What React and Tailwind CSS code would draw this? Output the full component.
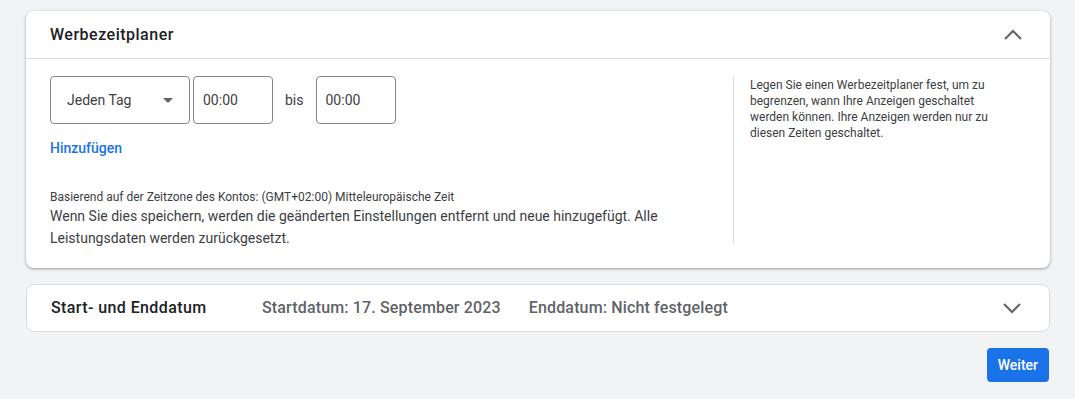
export default function App() {
  const font = { fontFamily: 'Roboto, "Noto Sans", Arial, sans-serif' };
  return (
    <div className="min-h-[399px] w-full bg-[#f1f3f4] pt-[11px] pl-[26px] pr-[25px]" style={font}>
      <div className="rounded-lg bg-white shadow-[0_1px_2px_rgba(60,64,67,0.3),0_1px_3px_1px_rgba(60,64,67,0.15)]">
        <div className="flex h-[48px] items-center justify-between border-b border-[#dadce0] px-6">
          <span className="text-[16px] font-medium tracking-[0.5px] text-[#202124]">Werbezeitplaner</span>
          <svg width="24" height="24" viewBox="0 0 24 24" className="mr-[1px]">
            <path d="M4 16l8-8 8 8" fill="none" stroke="#5f6368" strokeWidth="2" />
          </svg>
        </div>
        <div className="flex px-6 pt-[17px] pb-[19px]">
          <div className="flex-1">
            <div className="flex items-center">
              <div className="flex h-[48px] w-[140px] items-center justify-between rounded border border-[#80868b] pl-4 pr-4">
                <span className="text-[14px] text-[#3c4043]">Jeden Tag</span>
                <svg width="10" height="5" viewBox="0 0 10 5">
                  <path d="M0 0h10L5 5z" fill="#5f6368" />
                </svg>
              </div>
              <div className="ml-[3px] flex h-[48px] w-[80px] items-center rounded border border-[#80868b] pl-[9px]">
                <span className="text-[14px] text-[#3c4043]">00:00</span>
              </div>
              <span className="mx-[12px] text-[14px] text-[#3c4043]">bis</span>
              <div className="flex h-[48px] w-[80px] items-center rounded border border-[#80868b] pl-[9px]">
                <span className="text-[14px] text-[#3c4043]">00:00</span>
              </div>
            </div>
            <div className="mt-[14px] text-[14px] font-medium leading-[20px] text-[#1a73e8]">Hinzufügen</div>
            <div className="mt-[31px] text-[12px] leading-[16px] text-[#3c4043]">
              Basierend auf der Zeitzone des Kontos: (GMT+02:00) Mitteleuropäische Zeit
            </div>
            <div className="w-[660px] text-[14px] leading-[22px] text-[#3c4043]">
              Wenn Sie dies speichern, werden die geänderten Einstellungen entfernt und neue hinzugefügt. Alle
              Leistungsdaten werden zurückgesetzt.
            </div>
          </div>
          <div className="h-[168px] w-[293px] self-start border-l border-[#dadce0] pl-4 pr-[20px]">
            <p className="pt-[1px] text-[12px] leading-[16px] text-[#3c4043]">
              Legen Sie einen Werbezeitplaner fest, um zu begrenzen, wann Ihre Anzeigen geschaltet werden können. Ihre Anzeigen werden nur zu diesen Zeiten geschaltet.
            </p>
          </div>
        </div>
      </div>

      <div className="mt-[16px] flex h-[48px] items-center rounded-lg border border-[#dadce0] bg-white pl-6 pr-6">
        <span className="w-[211px] text-[16px] font-medium tracking-[0.4px] text-[#202124]">Start- und Enddatum</span>
        <span className="text-[16px] font-medium tracking-[0.15px] text-[#5f6368]">Startdatum: 17. September 2023</span>
        <span className="ml-[28px] text-[16px] font-medium tracking-[0.15px] text-[#5f6368]">Enddatum: Nicht festgelegt</span>
        <svg width="24" height="24" viewBox="0 0 24 24" className="ml-auto mr-[1px]">
          <path d="M4 8l8 8 8-8" fill="none" stroke="#5f6368" strokeWidth="2" />
        </svg>
      </div>

      <div className="mt-[16px] flex justify-end pr-px">
        <button className="h-[34px] rounded bg-[#1a73e8] px-[11px] text-[14px] font-medium text-white">
          Weiter
        </button>
      </div>
    </div>
  );
}
